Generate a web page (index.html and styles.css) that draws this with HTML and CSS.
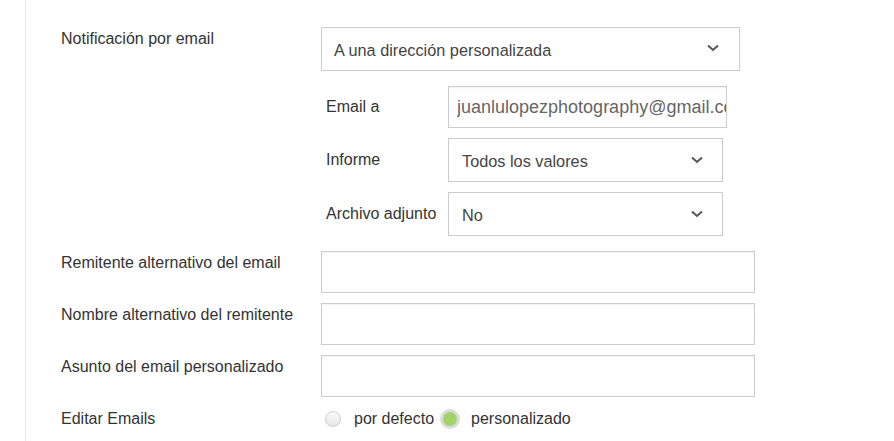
FILE: index.html
```html
<!DOCTYPE html>
<html lang="es">
<head>
<meta charset="utf-8">
<link rel="stylesheet" href="styles.css">
</head>
<body>
<div class="page">
  <div class="form">
    <div class="row row-top">
      <div class="lbl">Notificación por email</div>
      <div class="select select-main">
        <span>A una dirección personalizada</span>
        <svg class="chev" width="12" height="8" viewBox="0 0 12 8"><path d="M1 1.5 L6 6 L11 1.5" fill="none" stroke="#555" stroke-width="2"/></svg>
      </div>
    </div>
    <div class="sub">
      <div class="subrow">
        <div class="sublbl">Email a</div>
        <input class="input input-email" type="text" value="juanlulopezphotography@gmail.com">
      </div>
      <div class="subrow">
        <div class="sublbl">Informe</div>
        <div class="select select-sub">
          <span>Todos los valores</span>
          <svg class="chev" width="12" height="8" viewBox="0 0 12 8"><path d="M1 1.5 L6 6 L11 1.5" fill="none" stroke="#555" stroke-width="2"/></svg>
        </div>
      </div>
      <div class="subrow">
        <div class="sublbl">Archivo adjunto</div>
        <div class="select select-sub">
          <span>No</span>
          <svg class="chev" width="12" height="8" viewBox="0 0 12 8"><path d="M1 1.5 L6 6 L11 1.5" fill="none" stroke="#555" stroke-width="2"/></svg>
        </div>
      </div>
    </div>
    <div class="row row-input">
      <div class="lbl">Remitente alternativo del email</div>
      <input class="input input-wide" type="text">
    </div>
    <div class="row row-input">
      <div class="lbl">Nombre alternativo del remitente</div>
      <input class="input input-wide" type="text">
    </div>
    <div class="row row-input">
      <div class="lbl">Asunto del email personalizado</div>
      <input class="input input-wide" type="text">
    </div>
    <div class="row row-radio">
      <div class="lbl">Editar Emails</div>
      <div class="radios">
        <span class="radio"></span>
        <span class="rtext">por defecto</span>
        <span class="radio radio-on"></span>
        <span class="rtext rtext-on">personalizado</span>
      </div>
    </div>
  </div>
</div>
</body>
</html>
```
FILE: styles.css
```css
html, body {
  margin: 0;
  padding: 0;
  background: #fff;
  height: 100%;
}
body {
  font-family: "Liberation Sans", Arial, sans-serif;
  color: #333;
  overflow: hidden;
}
.page {
  margin-left: 25px;
  border-left: 1px solid #e6e6e6;
  min-height: 100%;
  box-sizing: border-box;
  padding: 27px 0 0 35px;
}
.row {
  display: flex;
  align-items: flex-start;
}
.lbl {
  width: 260px;
  flex: none;
  font-size: 16px;
  line-height: 20px;
  padding-top: 2px;
}
.select {
  box-sizing: border-box;
  border: 1px solid #cccccc;
  background: #fff;
  display: flex;
  align-items: center;
  justify-content: space-between;
  font-size: 16.3px;
  color: #444;
}
.select-main {
  width: 419px;
  height: 44px;
  padding: 3px 20px 0 12px;
}
.select-sub {
  width: 275px;
  height: 44px;
  padding: 3px 19px 0 13px;
}
.chev {
  display: block;
  margin-top: -4px;
}
.select-main .chev {
  margin-top: -6px;
}
.sub {
  margin: 15px 0 0 265px;
  display: flex;
  flex-direction: column;
  gap: 10px;
}
.subrow {
  display: flex;
  align-items: center;
}
.sublbl {
  width: 122px;
  flex: none;
  font-size: 16px;
  line-height: 20px;
}
.input {
  box-sizing: border-box;
  border: 1px solid #cccccc;
  box-shadow: inset 0 1px 2px rgba(0,0,0,0.06);
  background: #fff;
  height: 42px;
  margin: 0;
  font-family: "Liberation Sans", Arial, sans-serif;
  font-size: 16px;
  color: #666;
  outline: none;
  border-radius: 0;
}
.input-email {
  width: 279px;
  padding: 0 0 0 8px;
  font-size: 18px;
}
.input-wide {
  width: 434px;
  padding: 0 8px;
}
.row-input {
  margin-top: 15px;
}
.row-input + .row-input {
  margin-top: 10px;
}
.row-radio {
  margin-top: 10px;
  align-items: center;
  height: 24px;
}
.row-radio .lbl {
  padding-top: 0;
}
.radios {
  display: flex;
  align-items: center;
  padding-left: 4px;
  font-size: 16px;
  color: #333;
}
.radio {
  width: 16px;
  height: 16px;
  box-sizing: border-box;
  border-radius: 50%;
  border: 1px solid #cfcfcf;
  background: linear-gradient(#fafafa, #e6e6e6);
  flex: none;
}
.radio-on {
  width: 20px;
  height: 20px;
  border: 3px solid #dcdcdc;
  background: #a0d468;
  margin-left: 6px;
}
.rtext {
  margin-left: 13px;
}
.rtext-on {
  margin-left: 11px;
}
```
